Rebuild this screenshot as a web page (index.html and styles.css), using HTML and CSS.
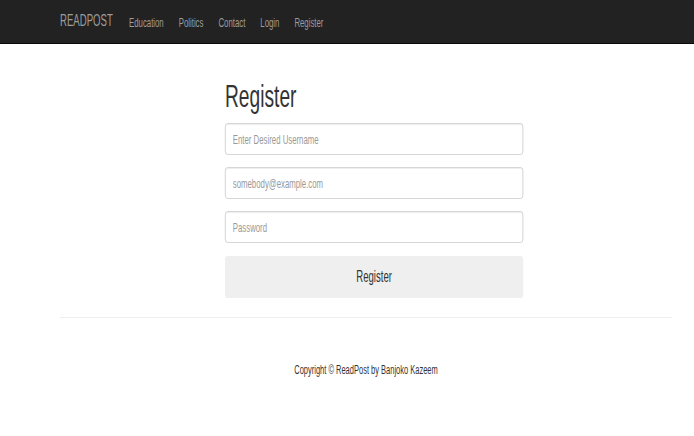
FILE: index.html
```html
<!DOCTYPE html>
<html lang="en">
<head>
<meta charset="utf-8">
<title>ReadPost - Register</title>
<link rel="stylesheet" href="styles.css">
</head>
<body>
<div class="viewport">
<div class="page">
  <nav class="navbar">
    <div class="nav-inner">
      <a class="brand" href="#">READPOST</a>
      <ul class="nav-links">
        <li><a href="#">Education</a></li>
        <li><a href="#">Politics</a></li>
        <li><a href="#">Contact</a></li>
        <li><a href="#">Login</a></li>
        <li><a href="#">Register</a></li>
      </ul>
    </div>
  </nav>
  <main class="container">
    <form class="register-form">
      <h1 class="title">Register</h1>
      <input class="field" type="text" placeholder="Enter Desired Username">
      <input class="field" type="email" placeholder="somebody@example.com">
      <input class="field" type="password" placeholder="Password">
      <button class="btn" type="button">Register</button>
    </form>
    <hr class="rule">
    <footer class="footer">Copyright © ReadPost by Banjoko Kazeem</footer>
  </main>
</div>
</div>
</body>
</html>
```
FILE: styles.css
```css
html, body {
  margin: 0;
  padding: 0;
  overflow: hidden;
  background: #fff;
}
body {
  font-family: "Liberation Sans", Arial, sans-serif;
  color: #333;
}
.viewport {
  width: 100%;
  height: 100vh;
  overflow: hidden;
}
.page {
  width: 1157px;
  transform: scaleX(0.6);
  transform-origin: 0 0;
}
.navbar {
  height: 44px;
  background: #222;
  border-bottom: 1px solid #080808;
  box-sizing: border-box;
}
.nav-inner {
  height: 100%;
  margin-left: 100px;
  display: flex;
  align-items: center;
}
.brand {
  font-size: 16px;
  color: #9d9d9d;
  text-decoration: none;
  margin-top: -1px;
}
.nav-links {
  list-style: none;
  margin: 0 0 0 27px;
  padding: 0;
  display: flex;
  gap: 25px;
}
.nav-links a {
  font-size: 13px;
  color: #9d9d9d;
  text-decoration: none;
}
.container {
  margin-left: 100px;
  width: 1020px;
}
.register-form {
  margin-left: 275px;
  width: 497px;
  display: flex;
  flex-direction: column;
}
.title {
  font-size: 32px;
  font-weight: 400;
  line-height: 35px;
  margin: 35px 0 9px;
  color: #333;
}
.field {
  box-sizing: border-box;
  height: 32px;
  margin: 0 0 12px;
  padding: 0 12px;
  border: 1px solid #ccc;
  border-radius: 4px;
  box-shadow: inset 0 1px 1px rgba(0,0,0,.075);
  font-family: inherit;
  font-size: 13px;
  color: #555;
  outline: none;
}
.field::placeholder {
  color: #999;
}
.btn {
  margin-top: 1px;
  height: 42px;
  border: none;
  border-radius: 4px;
  background: #efefef;
  font-family: inherit;
  font-size: 16px;
  color: #333;
}
.rule {
  margin: 19px 0 0;
  border: 0;
  border-top: 1px solid #eee;
}
.footer {
  margin-top: 43px;
  text-align: center;
  font-size: 12.5px;
  line-height: 18px;
  color: #333;
}
```
